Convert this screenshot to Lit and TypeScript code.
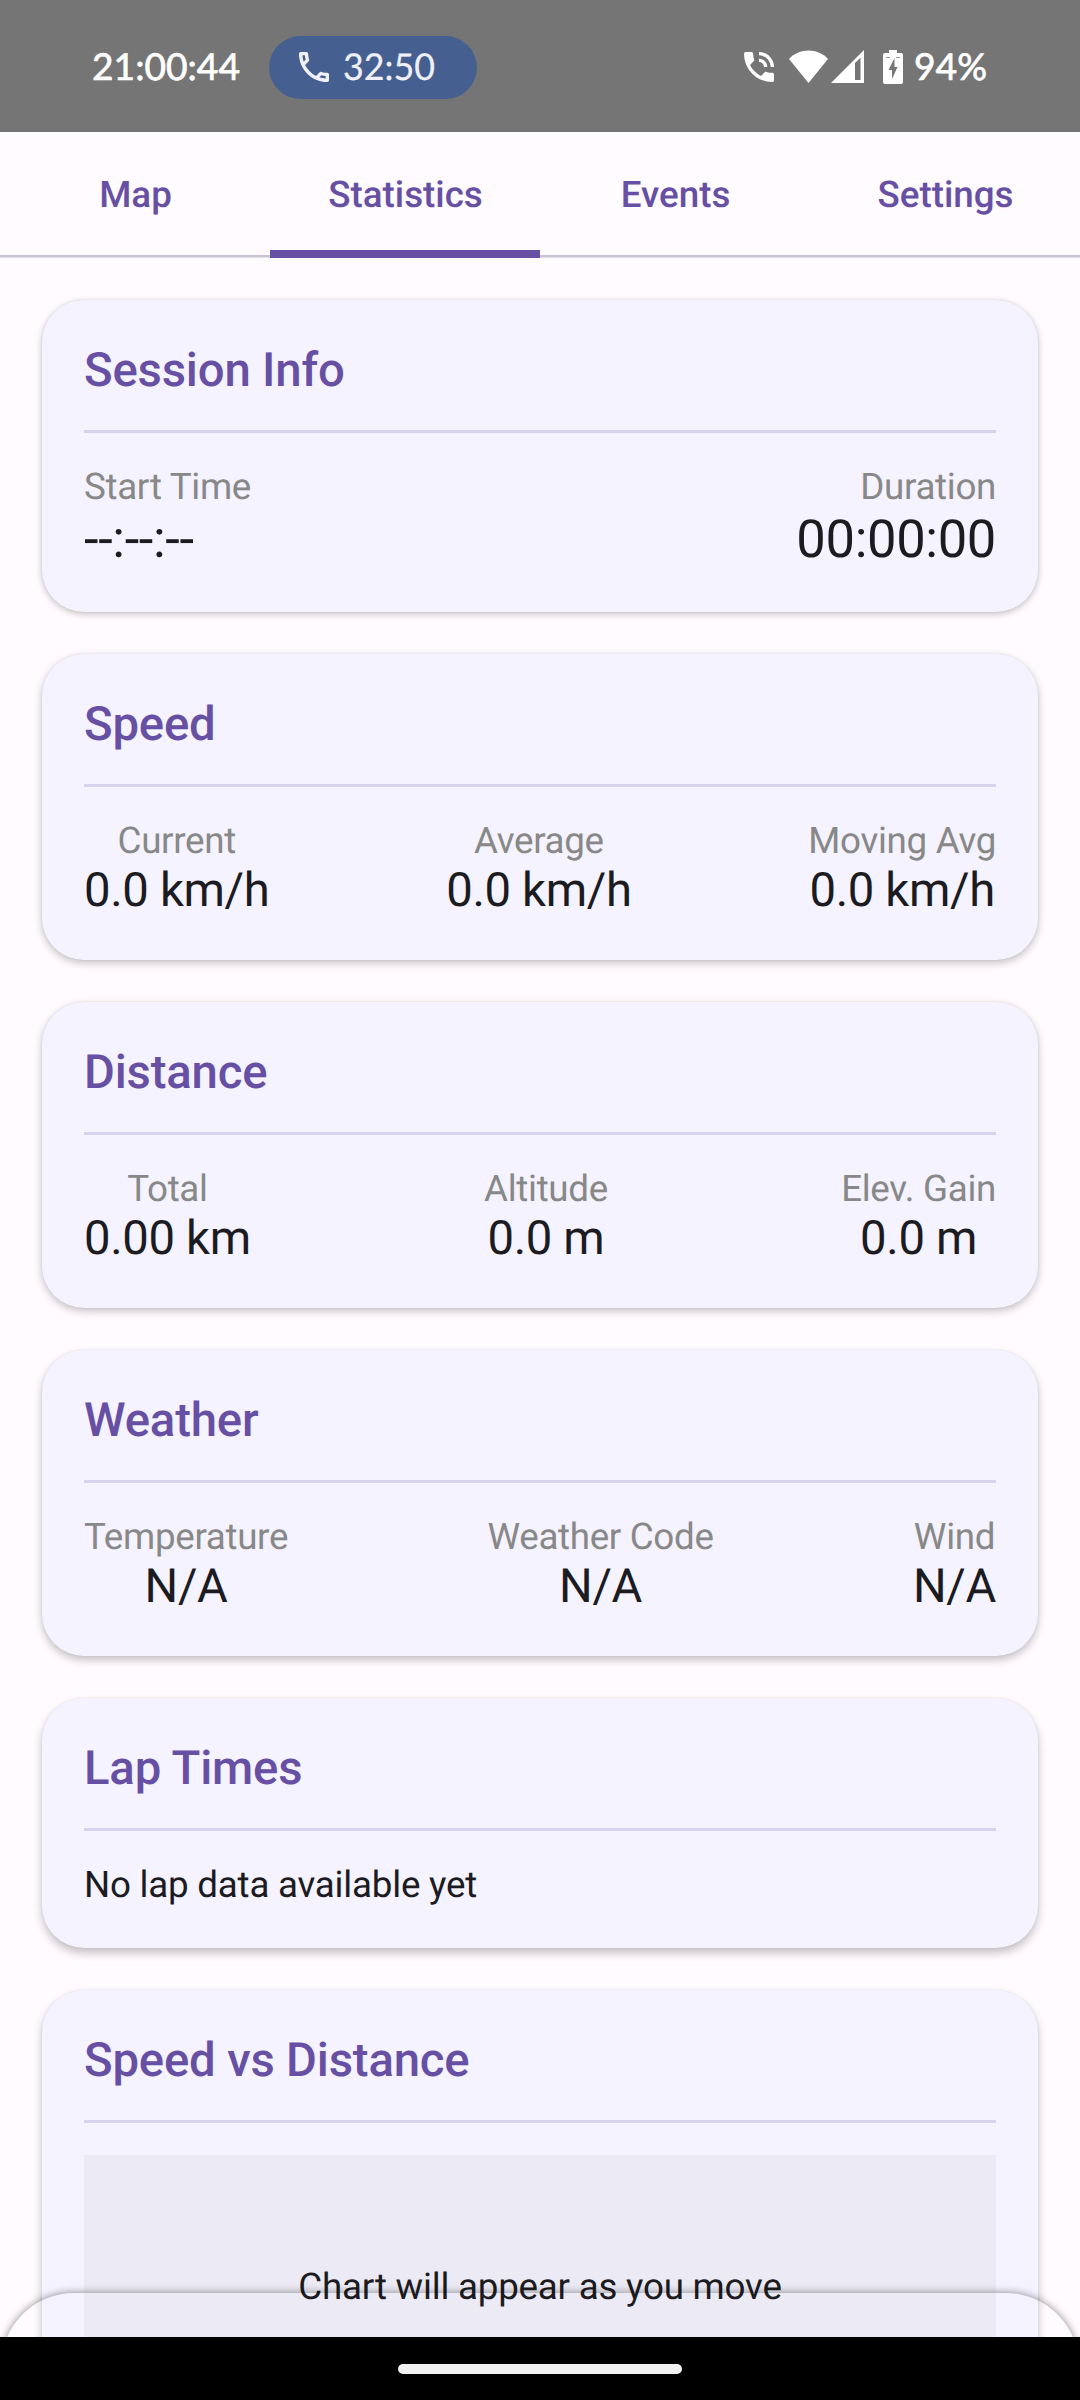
import { LitElement, html, css, nothing } from "lit";
import { customElement, property } from "lit/decorators.js";

interface Stat {
  label: string;
  value: string;
}

@customElement("status-bar")
class StatusBar extends LitElement {
  static styles = css`
    :host {
      display: flex;
      align-items: center;
      box-sizing: border-box;
      height: 132px;
      padding: 2px 90px 0 91px;
      background: #757575;
      color: #fff;
      font-family: Lato, sans-serif;
      font-size: 37px;
      line-height: 50px;
      white-space: nowrap;
    }
    svg {
      display: block;
      flex: none;
      fill: currentColor;
      overflow: visible;
    }
    .clock {
      width: 178px;
    }
    .clock text,
    .percent text {
      stroke: currentColor;
      stroke-width: 0.7px;
    }
    .call-time text {
      stroke: currentColor;
      stroke-width: 0.2px;
    }
    .call {
      display: flex;
      align-items: center;
      box-sizing: border-box;
      width: 208px;
      height: 63px;
      padding-left: 25px;
      border-radius: 32px;
      background: #455f91;
      color: #f0f0fa;
    }
    .call-time {
      margin-left: 9px;
    }
    .icons {
      display: flex;
      align-items: center;
      margin-left: auto;
    }
    .wifi {
      margin-left: 10px;
    }
    .signal {
      margin-left: 3px;
    }
    .battery {
      margin-left: 19px;
    }
    .percent {
      width: 76px;
      margin-left: 11px;
    }
  `;

  render() {
    return html`
      <span class="clock"><svg width="154" height="50"><text x="1" y="38" textLength="148" lengthAdjust="spacingAndGlyphs">21:00:44</text></svg></span>
      <div class="call">
        <svg width="40" height="40" viewBox="0 0 24 24">
          <path d="M6.54 5c.06.89.21 1.76.45 2.59l-1.2 1.2c-.41-1.2-.67-2.47-.76-3.79h1.51m9.86 12.02c.85.24 1.72.39 2.6.45v1.49c-1.32-.09-2.59-.35-3.8-.75l1.2-1.19M7.5 3H4c-.55 0-1 .45-1 1 0 9.39 7.61 17 17 17 .55 0 1-.45 1-1v-3.49c0-.55-.45-1-1-1-1.24 0-2.45-.2-3.57-.57-.1-.04-.21-.05-.31-.05-.26 0-.51.1-.71.29l-2.2 2.2c-2.83-1.45-5.15-3.76-6.59-6.59l2.2-2.2c.28-.28.36-.67.25-1.02C8.7 6.45 8.5 5.25 8.5 4c0-.55-.45-1-1-1z"></path>
        </svg>
        <span class="call-time"><svg width="98" height="50"><text x="0" y="38" textLength="92" lengthAdjust="spacingAndGlyphs">32:50</text></svg></span>
      </div>
      <div class="icons">
        <svg width="40" height="40" viewBox="0 0 24 24">
          <path d="M20 15.5c-1.25 0-2.45-.2-3.57-.57-.35-.11-.74-.03-1.02.24l-2.2 2.2c-2.83-1.44-5.15-3.75-6.59-6.59l2.2-2.21c.28-.26.36-.65.25-1C8.7 6.45 8.5 5.25 8.5 4c0-.55-.45-1-1-1H4c-.55 0-1 .45-1 1 0 9.39 7.61 17 17 17 .55 0 1-.45 1-1v-3.5c0-.55-.45-1-1-1zM19 12h2c0-4.97-4.03-9-9-9v2c3.87 0 7 3.13 7 7zm-4 0h2c0-2.76-2.24-5-5-5v2c1.66 0 3 1.34 3 3z"></path>
        </svg>
        <svg class="wifi" width="39" height="34" viewBox="0 0 39 34">
          <path d="M0 9C5 3.5 12 .5 19.500 .5S34 3.500 39 9L19.500 33z"></path>
        </svg>
        <svg class="signal" width="33" height="34" viewBox="0 0 33 34">
          <path fill-rule="evenodd" d="M33 0v33H0zM24 13v17h5.500V7.800z"></path>
        </svg>
        <svg class="battery" width="20" height="34" viewBox="0 0 20 34">
          <path fill-rule="evenodd" d="M6 0h8v3h4a2 2 0 0 1 2 2v27a2 2 0 0 1-2 2H2a2 2 0 0 1-2-2V5a2 2 0 0 1 2-2h4zM11.500 8L5.500 20H9v9l5.500-12H11.500zM3 7v.8h4V7zM13 7v.8h4V7z"></path>
        </svg>
        <span class="percent"><svg width="76" height="50"><text x="0" y="38" textLength="73" lengthAdjust="spacingAndGlyphs">94%</text></svg></span>
      </div>
    `;
  }
}

@customElement("tab-bar")
class TabBar extends LitElement {
  @property({ attribute: false }) tabs: string[] = [];
  @property() active = "";

  static styles = css`
    :host {
      display: block;
    }
    .tabs {
      display: grid;
      grid-template-columns: repeat(4, 1fr);
      height: 126px;
      background: linear-gradient(#cac4d0, #cac4d0) 0 123px / 100% 2px no-repeat,
        linear-gradient(#e2dde5, #e2dde5) 0 125px / 100% 1px no-repeat;
    }
    .tab {
      display: flex;
      align-items: center;
      justify-content: center;
      box-sizing: border-box;
      border-bottom: 8px solid transparent;
      padding: 7px 0 0 1px;
      color: #6750a4;
      font-size: 36.75px;
      font-weight: 500;
      line-height: 43px;
    }
    .tab.active {
      border-color: #6750a4;
    }
  `;

  render() {
    return html`<nav class="tabs">
      ${this.tabs.map(
        (t) => html`<div class="tab ${t === this.active ? "active" : ""}">${t}</div>`,
      )}
    </nav>`;
  }
}

@customElement("stat-card")
class StatCard extends LitElement {
  @property() heading = "";
  @property({ attribute: false }) stats: Stat[] = [];
  @property({ type: Boolean }) large = false;

  static styles = css`
    :host {
      display: block;
      padding: 42px;
      border-radius: 42px;
      background: #f4f3ff;
      box-shadow: 0 var(--drop, 3px) calc(var(--drop, 3px) + 5px) rgba(0, 0, 0, 0.24),
        0 0 2px rgba(0, 0, 0, 0.08);
      color: #1c1b1f;
    }
    .heading {
      margin: 0 0 32px;
      padding-top: 1px;
      color: #6750a4;
      font-size: 47.25px;
      font-weight: 500;
      line-height: 55px;
      letter-spacing: -0.17px;
    }
    .body {
      padding-top: 32px;
      border-top: 3px solid #d7d2ed;
      font-size: 36.75px;
      line-height: 43px;
      letter-spacing: -0.23px;
    }
    .stats {
      display: flex;
      justify-content: space-between;
      text-align: center;
    }
    .label {
      color: #888;
      letter-spacing: -0.32px;
    }
    .value {
      font-size: 47.25px;
      line-height: 56px;
      letter-spacing: -0.35px;
    }
    .large .value {
      font-size: 52.5px;
      line-height: 62px;
    }
    .large .stat {
      text-align: left;
    }
    .large .stat:last-child {
      text-align: right;
    }
  `;

  render() {
    return html`
      <h2 class="heading">${this.heading}</h2>
      <div class="body">
        ${this.stats.length
          ? html`<div class="stats ${this.large ? "large" : ""}">
              ${this.stats.map(
                (s) => html`<div class="stat">
                  <div class="label">${s.label}</div>
                  <div class="value">${s.value}</div>
                </div>`,
              )}
            </div>`
          : nothing}
        <slot></slot>
      </div>
    `;
  }
}

@customElement("app-root")
class AppRoot extends LitElement {
  static styles = css`
    :host {
      position: relative;
      display: flex;
      flex-direction: column;
      height: 2400px;
      overflow: hidden;
      background: #fffbff;
      font-family: Roboto, sans-serif;
      text-rendering: geometricPrecision;
    }
    .content {
      position: relative;
      flex: 1;
      min-height: 0;
      display: flex;
      flex-direction: column;
      gap: 42px;
      padding: 42px 42px 0;
      overflow: hidden;
    }
    .content > * {
      flex: none;
    }
    stat-card:nth-of-type(1) {
      --drop: 2px;
    }
    stat-card:nth-of-type(4) {
      --drop: 4px;
    }
    stat-card:nth-of-type(n + 5) {
      --drop: 5px;
    }
    .note,
    .chart {
      letter-spacing: -0.23px;
    }
    .chart {
      display: flex;
      align-items: center;
      justify-content: center;
      height: 262px;
      background: #ecebf5;
    }
    .sheet {
      position: absolute;
      left: 1px;
      right: 1px;
      top: 2035px;
      height: 200px;
      border-radius: 73px 73px 0 0;
      box-shadow: 0 0 8px rgba(0, 0, 0, 0.45);
    }
    .navigation {
      display: flex;
      align-items: center;
      justify-content: center;
      height: 63px;
      background: #000;
    }
    .handle {
      width: 284px;
      height: 10px;
      border-radius: 5px;
      background: #f2f2f2;
    }
  `;

  render() {
    return html`
      <status-bar></status-bar>
      <tab-bar .tabs=${["Map", "Statistics", "Events", "Settings"]} active="Statistics"></tab-bar>
      <main class="content">
        <stat-card
          heading="Session Info"
          large
          .stats=${[
            { label: "Start Time", value: "--:--:--" },
            { label: "Duration", value: "00:00:00" },
          ]}
        ></stat-card>
        <stat-card
          heading="Speed"
          .stats=${[
            { label: "Current", value: "0.0 km/h" },
            { label: "Average", value: "0.0 km/h" },
            { label: "Moving Avg", value: "0.0 km/h" },
          ]}
        ></stat-card>
        <stat-card
          heading="Distance"
          .stats=${[
            { label: "Total", value: "0.00 km" },
            { label: "Altitude", value: "0.0 m" },
            { label: "Elev. Gain", value: "0.0 m" },
          ]}
        ></stat-card>
        <stat-card
          heading="Weather"
          .stats=${[
            { label: "Temperature", value: "N/A" },
            { label: "Weather Code", value: "N/A" },
            { label: "Wind", value: "N/A" },
          ]}
        ></stat-card>
        <stat-card heading="Lap Times">
          <div class="note">No lap data available yet</div>
        </stat-card>
        <stat-card heading="Speed vs Distance">
          <div class="chart">Chart will appear as you move</div>
        </stat-card>
        <div class="sheet"></div>
      </main>
      <footer class="navigation"><div class="handle"></div></footer>
    `;
  }
}
